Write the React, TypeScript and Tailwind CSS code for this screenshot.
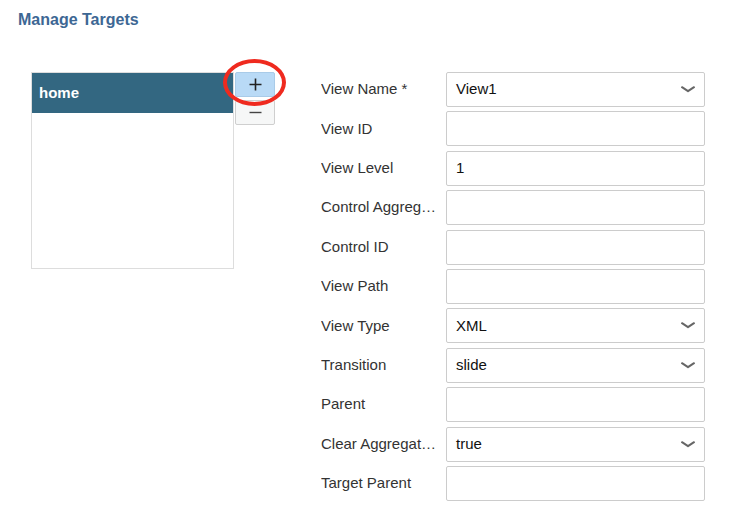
import React from 'react';

type Field = { label: string; value?: string; select?: boolean };

const fields: Field[] = [
  { label: 'View Name *', value: 'View1', select: true },
  { label: 'View ID' },
  { label: 'View Level', value: '1' },
  { label: 'Control Aggregation' },
  { label: 'Control ID' },
  { label: 'View Path' },
  { label: 'View Type', value: 'XML', select: true },
  { label: 'Transition', value: 'slide', select: true },
  { label: 'Parent' },
  { label: 'Clear Aggregation', value: 'true', select: true },
  { label: 'Target Parent' },
];

function Chevron() {
  return (
    <svg width="14" height="7" viewBox="0 0 14 7" className="shrink-0">
      <path d="M1 1.2 L7 5.2 L13 1.2" fill="none" stroke="#666" strokeWidth="2" strokeLinecap="round" strokeLinejoin="round" />
    </svg>
  );
}

export default function App() {
  return (
    <div className="w-[739px] h-[525px] bg-white text-[#333] font-['Liberation_Sans',Arial,sans-serif] overflow-hidden">
      {/* Page title */}
      <div className="pl-[18px] pt-[10px] h-[30px] text-[16px] font-bold text-[#3d6794] leading-[20px]">
        Manage Targets
      </div>

      <div className="flex pt-[42px]">
        {/* Target list */}
        <div className="ml-[31px] w-[203px] h-[197px] border border-[#dddddd]">
          <div className="h-[40px] bg-[#336781] text-white text-[15px] font-bold flex items-center pl-[7px]">
            home
          </div>
        </div>

        {/* Add / remove buttons */}
        <div className="relative ml-[1px] flex flex-col gap-[3px]">
          <button className="w-[40px] h-[25px] bg-[#b9daf6] border border-[#a9cbe8] rounded-[2px] flex items-center justify-center">
            <svg width="13" height="13" viewBox="0 0 13 13">
              <path d="M6.5 0.5 V12.5 M0.5 6.5 H12.5" stroke="#222" strokeWidth="1.6" />
            </svg>
          </button>
          <button className="w-[40px] h-[25px] bg-[#f6f7f7] border border-[#cfcfcf] rounded-[2px] flex items-center justify-center">
            <svg width="13" height="3" viewBox="0 0 13 3">
              <path d="M0.5 1.5 H12.5" stroke="#444" strokeWidth="1.4" />
            </svg>
          </button>
          <div className="absolute left-[-12px] top-[-13px] w-[63px] h-[47px] rounded-[50%] border-[4.5px] border-[#ef2a1f]" />
        </div>

        {/* Form */}
        <div className="ml-[46px] flex flex-col gap-[4.4px]">
          {fields.map((f) => (
            <div key={f.label} className="flex items-center h-[35px]">
              <div className="w-[118px] mr-[7px] text-[15px] truncate">{f.label}</div>
              <div className="w-[259px] h-[35px] border border-[#cccccc] rounded-[2px] flex items-center justify-between pl-[9px] pr-[9px] text-[15px] text-[#111]">
                <span>{f.value ?? ''}</span>
                {f.select && <Chevron />}
              </div>
            </div>
          ))}
        </div>
      </div>
    </div>
  );
}
